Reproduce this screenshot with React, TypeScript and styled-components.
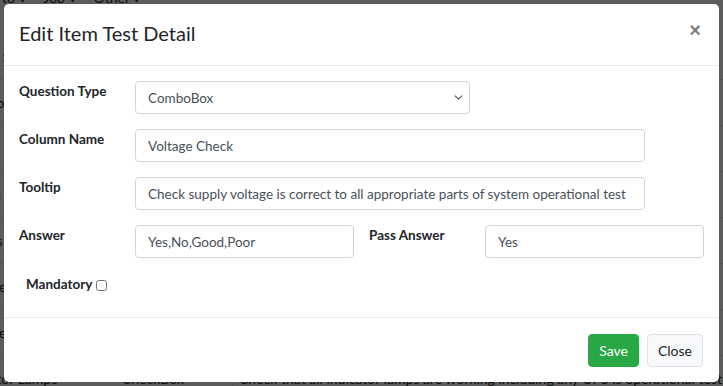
import React, { useState } from "react";
import styled, { createGlobalStyle } from "styled-components";

const GlobalStyle = createGlobalStyle`
  html, body {
    margin: 0;
    padding: 0;
    background: #ffffff;
    font-family: Lato, "Noto Sans", sans-serif;
    color: #212529;
  }
  * {
    box-sizing: border-box;
  }
`;

const Page = styled.div`
  width: 723px;
  height: 386px;
  overflow: hidden;
  position: relative;
  font-size: 14px;
`;

const TopNav = styled.nav`
  display: flex;
  gap: 18px;
  margin-top: -10px;
  padding-left: 2px;
  font-size: 14px;
  line-height: 16px;
`;

const BackTable = styled.div`
  display: flex;
  flex-direction: column;
  margin-top: 28px;
  margin-left: -40px;
`;

const BackRow = styled.div`
  display: grid;
  grid-template-columns: 162px 110px 1fr;
  height: 46px;
  align-items: center;
  border-bottom: 1px solid #dee2e6;
  font-size: 14px;

  > span:last-child {
    border-left: 1px solid #dee2e6;
    padding-left: 6px;
    height: 100%;
    display: flex;
    align-items: center;
    white-space: nowrap;
  }
`;

const Backdrop = styled.div`
  position: absolute;
  inset: 0;
  background: rgba(0, 0, 0, 0.64);
  padding: 4px;
`;

const Modal = styled.div`
  width: 715px;
  height: 378px;
  background: #fff;
  border-radius: 5px;
  display: flex;
  flex-direction: column;
  font-family: Lato, "Noto Sans", sans-serif;
`;

const Header = styled.div`
  height: 62px;
  display: flex;
  align-items: center;
  justify-content: space-between;
  padding: 0 18px 4px 15px;
  border-bottom: 1px solid #e9ecef;
`;

const Title = styled.h5`
  margin: 0;
  font-size: 20px;
  font-weight: 400;
  color: #212529;
`;

const CloseX = styled.button`
  background: none;
  border: none;
  padding: 0;
  margin-top: -6px;
  font-size: 20px;
  font-weight: 700;
  line-height: 1;
  color: #000;
  opacity: 0.5;
  cursor: pointer;
`;

const Body = styled.div`
  flex: 1;
  padding: 15px;
  display: flex;
  flex-direction: column;
  gap: 15px;
`;

const FieldRow = styled.div`
  display: grid;
  grid-template-columns: 116px 1fr;
  align-items: start;
`;

const PairRow = styled.div`
  display: grid;
  grid-template-columns: 116px 219px 15px 116px 1fr;
  align-items: start;
`;

const Label = styled.label`
  font-weight: 700;
  font-size: 13.5px;
  line-height: 20px;
  color: #212529;
`;

const TextInput = styled.input<{ w?: number }>`
  width: ${(p) => (p.w ? `${p.w}px` : "100%")};
  height: 33px;
  padding: 0 12px;
  border: 1px solid #ced4da;
  border-radius: 4px;
  font-family: inherit;
  font-size: 13.5px;
  color: #495057;
  background: #fff;
  outline: none;
`;

const SelectWrap = styled.div`
  width: 335px;
  height: 33px;
  border: 1px solid #ced4da;
  border-radius: 4px;
  display: flex;
  align-items: center;
  justify-content: space-between;
  padding: 0 6px 0 12px;
  font-size: 13.5px;
  color: #495057;
`;

const CheckRow = styled.div`
  display: flex;
  align-items: center;
  padding-left: 7px;
  padding-top: 1px;
  gap: 4px;
`;

const Check = styled.input`
  width: 11px;
  height: 11px;
  margin: 2px 0 0 0;
  accent-color: #6c757d;
`;

const Footer = styled.div`
  height: 65px;
  border-top: 1px solid #e9ecef;
  display: flex;
  align-items: center;
  justify-content: flex-end;
  gap: 8px;
  padding: 0 16px 0 15px;
`;

const Button = styled.button<{ variant: "save" | "close" }>`
  height: 33px;
  padding: 0 10px;
  border-radius: 4px;
  font-family: inherit;
  font-size: 14px;
  cursor: pointer;
  border: 1px solid
    ${(p) => (p.variant === "save" ? "#28a745" : "#dee2e6")};
  background: ${(p) => (p.variant === "save" ? "#28a745" : "#f8f9fa")};
  color: ${(p) => (p.variant === "save" ? "#fff" : "#212529")};
`;

function Chevron() {
  return (
    <svg width="9" height="9" viewBox="0 0 16 16" fill="none">
      <path
        d="M2 5l6 6 6-6"
        stroke="#555"
        strokeWidth="2"
        strokeLinecap="round"
        strokeLinejoin="round"
      />
    </svg>
  );
}

const backRows = [
  ["Power Supply", "ComboBox", "Check supply voltage is correct"],
  ["Test Voltage", "TextBox", "Voltage reading"],
  ["Fuses", "CheckBox", "Check fuses"],
  ["Cables", "CheckBox", "Check all cables"],
  ["Covers", "CheckBox", "Check covers"],
  ["Voltage", "ComboBox", "Voltage check"],
  ["Voltage Test", "ComboBox", "Voltage test"],
  [
    "Indicator Lamps",
    "CheckBox",
    "Check that all indicator lamps are working including any UPS is operational test",
  ],
];

export default function App() {
  const [mandatory, setMandatory] = useState(false);

  return (
    <Page>
      <GlobalStyle />
      <TopNav>
        <span>to ▾</span>
        <span>Job ▾</span>
        <span>Other ▾</span>
      </TopNav>
      <BackTable>
        {backRows.map((r) => (
          <BackRow key={r[0]}>
            <span>{r[0]}</span>
            <span>{r[1]}</span>
            <span>{r[2]}</span>
          </BackRow>
        ))}
      </BackTable>

      <Backdrop>
        <Modal>
          <Header>
            <Title>Edit Item Test Detail</Title>
            <CloseX aria-label="Close">×</CloseX>
          </Header>
          <Body>
            <FieldRow>
              <Label>Question Type</Label>
              <SelectWrap>
                <span>ComboBox</span>
                <Chevron />
              </SelectWrap>
            </FieldRow>
            <FieldRow>
              <Label>Column Name</Label>
              <TextInput w={510} defaultValue="Voltage Check" />
            </FieldRow>
            <FieldRow>
              <Label>Tooltip</Label>
              <TextInput
                w={510}
                defaultValue="Check supply voltage is correct to all appropriate parts of system operational test"
              />
            </FieldRow>
            <PairRow>
              <Label>Answer</Label>
              <TextInput defaultValue="Yes,No,Good,Poor" />
              <span />
              <Label>Pass Answer</Label>
              <TextInput defaultValue="Yes" />
            </PairRow>
            <CheckRow>
              <Label>Mandatory</Label>
              <Check
                type="checkbox"
                checked={mandatory}
                onChange={(e) => setMandatory(e.target.checked)}
              />
            </CheckRow>
          </Body>
          <Footer>
            <Button variant="save">Save</Button>
            <Button variant="close">Close</Button>
          </Footer>
        </Modal>
      </Backdrop>
    </Page>
  );
}
